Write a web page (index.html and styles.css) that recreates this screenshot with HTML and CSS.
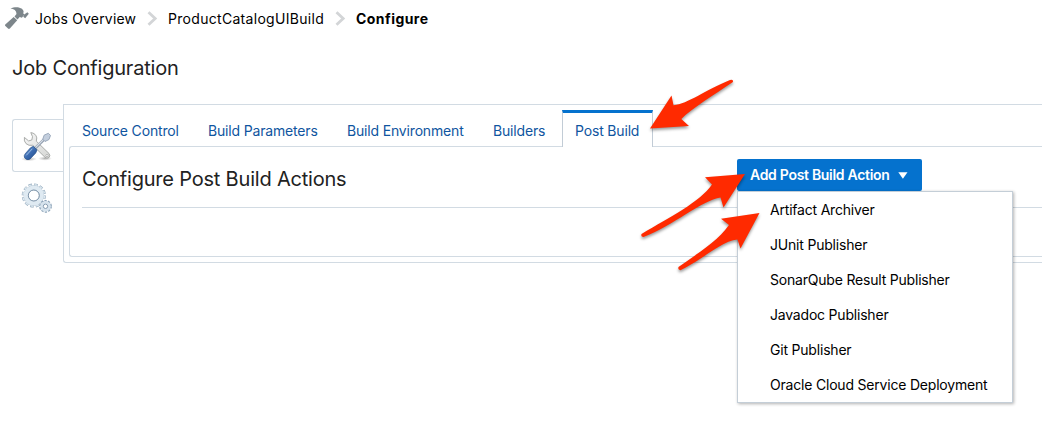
FILE: index.html
```html
<!DOCTYPE html>
<html lang="en">
<head>
<meta charset="utf-8">
<title>Job Configuration</title>
<link rel="stylesheet" href="styles.css">
</head>
<body>
<nav class="breadcrumb">
  <svg class="hammer" width="24" height="24" viewBox="0 0 24 24" fill="#7d868b">
    <path d="M5.500 2.600C9 .8 14 .6 17 2.800L18.600 5l-.3 2.400 1.200 1.200-2.600 3.200-2.200-.8-2.200 2.400-3-3 2-2.400Q11.500 5.400 9.800 4 8 3 5.500 2.600z"/>
    <path d="M19.300 8.600l1.300-1.200 1.800-1.200 1.400 1.500-3.600 4.500-2-1.500z"/>
    <path d="M8.700 11.100l3.500 3.200-7.300 8.200q-1 .8-1.900 0L.4 20.100q-.8-1 .1-1.800z"/>
  </svg>
  <a class="crumb crumb-jobs">Jobs Overview</a>
  <svg class="chevron" width="11" height="15" viewBox="0 0 11 15"><path d="M1.500 1.200L8.200 7.500l-6.700 6.300" fill="none" stroke="#d3d5d7" stroke-width="2.800"/></svg>
  <a class="crumb crumb-project">ProductCatalogUIBuild</a>
  <svg class="chevron" width="11" height="15" viewBox="0 0 11 15"><path d="M1.500 1.200L8.200 7.500l-6.700 6.300" fill="none" stroke="#d3d5d7" stroke-width="2.800"/></svg>
  <strong class="crumb crumb-current">Configure</strong>
</nav>
<h1 class="title">Job Configuration</h1>
<main class="layout">
  <aside class="side">
    <div class="side-tab side-active">
      <svg width="32" height="32" viewBox="0 0 32 32">
        <defs>
          <linearGradient id="steel" x1="0" y1="0" x2="1" y2="1"><stop offset="0" stop-color="#f7f7f7"/><stop offset="1" stop-color="#d5d6d4"/></linearGradient>
          <linearGradient id="handle" x1="0" y1="0" x2="1" y2="1"><stop offset="0" stop-color="#7fa9dc"/><stop offset=".5" stop-color="#3b6bb0"/><stop offset="1" stop-color="#204a87"/></linearGradient>
          <radialGradient id="ground"><stop offset="0" stop-color="#777" stop-opacity=".6"/><stop offset="1" stop-color="#999" stop-opacity="0"/></radialGradient>
        </defs>
        <ellipse cx="8" cy="28" rx="8" ry="2.200" fill="url(#ground)"/>
        <ellipse cx="24" cy="27.500" rx="7" ry="2.200" fill="url(#ground)"/>
        <path d="M9.800 1.600q5 .6 6 5.300l-.5 3.300L28 22.500q1.700 2.200 0 4-2 1.600-4-.2L11.800 14.300q-4.200.8-6.800-1.700-2.300-2.400-1.600-6.200l4.200 3.500 3.200-.9.700-3.300z" fill="url(#steel)" stroke="#a2a4a2" stroke-width=".9" stroke-linejoin="round"/>
        <circle cx="26" cy="24.500" r="1.100" fill="#fff" stroke="#999" stroke-width=".6"/>
        <path d="M14.200 17.200l8.800-8.800" stroke="#94a0b0" stroke-width="2.800"/>
        <path d="M14.400 16.700l8.500-8.500" stroke="#d9e0e9" stroke-width="1.200"/>
        <path d="M21.800 8.200l1.300-4 4.200-1.900 2.200 2.100-1.500 4.100-4 2z" fill="#c3cedd" stroke="#93a2b6" stroke-width=".9" stroke-linejoin="round"/>
        <path d="M12.300 15.300l3.700 3.600-1.300 3.100-5.700 6q-2 1.300-4.200 0l-1.300-1.500q-.8-1.800.7-3.700l5.300-6z" fill="url(#handle)" stroke="#204a87" stroke-width=".7"/>
        <path d="M11.300 17.800l-6 6.500" stroke="#9dbde5" stroke-width="1"/>
      </svg>
    </div>
    <div class="side-tab">
      <svg width="32" height="32" viewBox="0 0 32 32" fill="none">
        <g>
          <circle cx="12.800" cy="12.500" r="10.500" stroke="#93a9bc" stroke-width="3.200" stroke-dasharray="3.400 2.098"/>
          <circle cx="12.800" cy="12.500" r="10.300" stroke="#dce8f0" stroke-width="2.600" stroke-dasharray="2.600 2.793" stroke-dashoffset="-.4"/>
          <circle cx="12.800" cy="12.500" r="7.700" stroke="#a9bbca" stroke-width="5"/>
          <circle cx="12.800" cy="12.500" r="7.900" stroke="#dfeaf2" stroke-width="4.400"/>
          <circle cx="12.800" cy="12.500" r="5.500" stroke="#8096ab" stroke-width="1"/>
        </g>
        <g>
          <circle cx="24.500" cy="23.300" r="5.200" stroke="#8ca3b8" stroke-width="2.400" stroke-dasharray="2.100 1.167"/>
          <circle cx="24.500" cy="23.300" r="3.900" stroke="#d6e3ed" stroke-width="2.900"/>
          <circle cx="24.500" cy="23.300" r="2.200" fill="#fff" stroke="#849bb0" stroke-width="1"/>
        </g>
      </svg>
    </div>
  </aside>
  <section class="panel">
    <div class="tabs">
      <a class="tab tab-source">Source Control</a>
      <a class="tab tab-params">Build Parameters</a>
      <a class="tab tab-env">Build Environment</a>
      <a class="tab tab-builders">Builders</a>
      <a class="tab tab-active">Post Build</a>
    </div>
    <div class="content">
      <header class="content-head">
        <h2 class="subtitle">Configure Post Build Actions</h2>
        <div class="dropdown">
          <button class="add-button"><span>Add Post Build Action</span><svg width="10" height="7" viewBox="0 0 10 7"><path d="M.3 .3h9.200L4.900 6.800z" fill="#fff"/></svg></button>
          <ul class="menu">
            <li>Artifact Archiver</li>
            <li>JUnit Publisher</li>
            <li>SonarQube Result Publisher</li>
            <li>Javadoc Publisher</li>
            <li>Git Publisher</li>
            <li>Oracle Cloud Service Deployment</li>
          </ul>
        </div>
      </header>
    </div>
  </section>
</main>
<svg class="arrows" width="1042" height="424" viewBox="0 0 1042 424" fill="#ff2a00">
  <path d="M650 128.500L671.500 95.500L673.500 105.200C688 104 705 90 730 80Q733.500 79 733 82C714 95 692 108 681.300 119L689 126Z"/>
  <path d="M745 174L705 177.300L712 184.500C700 202 670 217 641.500 234Q640.500 237 643.500 237C673 226 702 200 720.500 197.500L723.500 207.500Z"/>
  <path d="M759.500 213L721 218.800L729 225C718 241 698 253 678.500 267Q677.500 270 680.500 270.200C702 260 721 241 737.500 239.500L740.500 248.500Z"/>
</svg>
</body>
</html>
```
FILE: styles.css
```css
* { box-sizing: border-box; }
body {
  margin: 0;
  height: 424px;
  overflow: hidden;
  position: relative;
  background: #fff;
  color: #000;
  font: 14px/20px Inter, "Liberation Sans", sans-serif;
}
.breadcrumb { display: flex; align-items: center; height: 37px; padding-left: 5px; }
.hammer { flex: none; margin-right: 6px; margin-top: -1px; }
.crumb { white-space: nowrap; }
.crumb-jobs { width: 101px; letter-spacing: .18px; }
.crumb-project { width: 156px; letter-spacing: .3px; }
.crumb-current { font-weight: 700; letter-spacing: .45px; }
.chevron { flex: none; margin: 0 10px 0 11px; }
.title { margin: 15px 0 0 12px; font-size: 20px; line-height: 32px; font-weight: 400; letter-spacing: -.2px; color: #222; }
.layout { display: flex; margin-top: 20px; }
.side { width: 51px; margin: 15px 0 0 12px; }
.side-tab { height: 53px; padding: 11px 0 0 9px; }
.side-tab svg { display: block; }
.side-active { border: 1px solid #d2dbe3; border-right: 0; border-radius: 3px 0 0 3px; padding-left: 8px; }
.panel { flex: 1; height: 159px; padding: 5px 0 0 5px; border: 1px solid #d2dbe3; border-right: 0; border-radius: 0 0 0 3px; }
.tabs { display: flex; height: 37px; letter-spacing: -.17px; }
.tab { padding: 11px 13px 0 12px; color: #0f55a0; white-space: nowrap; }
.tab-source { width: 126px; padding-left: 13px; }
.tab-params { width: 139px; padding-left: 13px; }
.tab-env { width: 146px; padding-left: 13px; }
.tab-builders { width: 82px; padding-left: 13px; }
.tab-active { width: 91px; height: 37px; padding-top: 8px; border: 1px solid #c2ccd6; border-top: 3px solid #0572ce; border-bottom: 0; background: #fff; position: relative; z-index: 1; }
.content { height: 111px; margin-top: -1px; padding-left: 12px; border: 1px solid #d2dbe3; border-right: 0; border-radius: 3px 0 0 3px; }
.content-head { display: flex; height: 61px; border-bottom: 1px solid #d2dbe3; }
.subtitle { width: 655px; margin: 16px 0 0; font-size: 20px; line-height: 32px; font-weight: 400; letter-spacing: -.2px; color: #222; }
.dropdown { position: relative; padding-top: 12px; }
.add-button { display: flex; align-items: center; gap: 8px; width: 185px; height: 32px; padding: 0 0 0 13px; border: 0; border-radius: 2px; background: #0572ce; color: #fff; font: 600 14px/20px Inter, "Liberation Sans", sans-serif; letter-spacing: -.3px; white-space: nowrap; }
.menu { position: absolute; top: 44px; left: 0; width: 276px; height: 212px; margin: 0; padding: 0 0 0 32px; list-style: none; background: #fff; border: 1px solid #c4ced7; box-shadow: 1px 1px 3px rgba(0,0,0,.3); letter-spacing: -.2px; }
.menu li { height: 35px; line-height: 35px; white-space: nowrap; }
.arrows { position: absolute; left: 0; top: 0; z-index: 3; filter: drop-shadow(0 2px 1.500px rgba(0,0,0,.4)); pointer-events: none; }
```
